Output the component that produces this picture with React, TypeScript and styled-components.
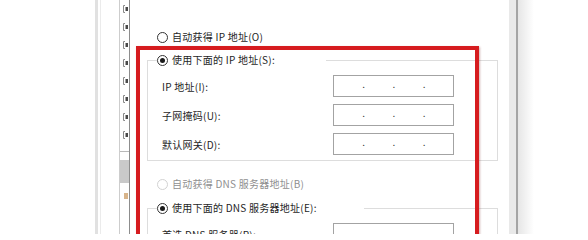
import * as React from 'react';
import styled, { createGlobalStyle } from 'styled-components';

const GlobalStyle = createGlobalStyle`
  html, body {
    margin: 0;
    padding: 0;
    background: #ffffff;
  }
  body {
    font-family: "Noto Sans CJK SC", "Noto Sans", sans-serif;
    font-size: 10px;
    letter-spacing: 0.25px;
    color: #1e1e1e;
  }
`;

const Page = styled.div`
  display: flex;
  width: 588px;
  height: 234px;
  overflow: hidden;
  background: #ffffff;
`;

/* the Ethernet properties window that sits behind the dialog */
const BackWindow = styled.div`
  display: flex;
  flex-shrink: 0;
  width: 129px;
  height: 100%;
`;

const Gutter = styled.div`
  width: 95px;
  flex-shrink: 0;
`;

const FrameEdge = styled.div`
  width: 3px;
  flex-shrink: 0;
  background: #e1e1e1;
`;

const FrameLine = styled.div`
  width: 1px;
  margin-left: 2px;
  flex-shrink: 0;
  background: #ebebeb;
`;

const TabGap = styled.div`
  width: 18px;
  flex-shrink: 0;
`;

const Pane = styled.div`
  flex: 1;
  display: flex;
  flex-direction: column;
  border-left: 1px solid #cdcdcd;
`;

const ListBox = styled.div`
  height: 152px;
  box-sizing: border-box;
  display: flex;
  flex-direction: column;
  gap: 10px;
  padding: 5px 0 0 3px;
  border-bottom: 1px solid #b9b9b9;
`;

const ButtonStub = styled.div`
  margin-top: 8px;
  height: 23px;
  background: #c9c9c9;
`;

const Glyph = styled.div`
  margin: 10px 0 0 4px;
  width: 4px;
  height: 6px;
  background: #d8b48a;
`;

const Dialog = styled.div`
  position: relative;
  flex-shrink: 0;
  box-sizing: border-box;
  width: 380px;
  height: 100%;
  display: flex;
  flex-direction: column;
  align-items: stretch;
  padding: 30px 11px 0 17px;
  background: #ffffff;
  border-left: 1px solid #8d8d8d;
`;

const RightFrame = styled.div`
  width: 7px;
  flex-shrink: 0;
  background: #e9e9e9;
`;

const DarkEdge = styled.div`
  width: 2px;
  flex-shrink: 0;
  background: #a4a4a4;
`;

const Shadow = styled.div`
  width: 16px;
  flex-shrink: 0;
  background: linear-gradient(to right, #e6e6e6, #ffffff);
`;

const RadioRow = styled.label<{ $gap?: number; $inset?: number }>`
  display: flex;
  align-items: center;
  gap: 4px;
  height: 14px;
  line-height: 14px;
  margin-top: ${(p) => p.$gap ?? 0}px;
  margin-left: ${(p) => p.$inset ?? 0}px;
  white-space: nowrap;
`;

const Circle = styled.span<{ $checked?: boolean; $disabled?: boolean }>`
  position: relative;
  box-sizing: border-box;
  width: 11px;
  height: 11px;
  border-radius: 50%;
  border: 1px solid ${(p) => (p.$disabled ? '#d2d2d2' : '#333333')};
  background: #ffffff;
  flex-shrink: 0;

  &::after {
    content: '';
    display: ${(p) => (p.$checked ? 'block' : 'none')};
    position: absolute;
    left: 2px;
    top: 2px;
    width: 5px;
    height: 5px;
    border-radius: 50%;
    background: #1a1a1a;
  }
`;

const RadioText = styled.span<{ $disabled?: boolean }>`
  color: ${(p) => (p.$disabled ? '#8f8f8f' : '#1e1e1e')};
`;

const GroupBox = styled.fieldset<{ $gap: number }>`
  margin: ${(p) => p.$gap}px 0 0 0;
  padding: 8px 43px 5px 14px;
  border: 1px solid #dddddd;
  min-width: 0;
  display: flex;
  flex-direction: column;
  gap: 7px;
`;

const GroupLegend = styled.legend<{ $width: number }>`
  box-sizing: border-box;
  width: ${(p) => p.$width}px;
  height: 14px;
  padding: 0;
  margin-left: -5px;
`;

const FieldRow = styled.div`
  display: flex;
  align-items: center;
  justify-content: space-between;
  height: 22px;
`;

const FieldLabel = styled.span`
  color: #1e1e1e;
`;

const IpBox = styled.div`
  box-sizing: border-box;
  width: 121px;
  height: 22px;
  display: flex;
  align-items: center;
  border: 1px solid #a3a3a3;
  background: #ffffff;
`;

const Segment = styled.span`
  flex: 1;
`;

const Dot = styled.span`
  width: 2px;
  text-align: center;
  font-size: 10px;
  line-height: 10px;
  letter-spacing: 0;
  color: #333333;
  transform: translateY(-2px);
`;

const Highlight = styled.div`
  position: absolute;
  left: 6px;
  top: 46px;
  width: 343px;
  height: 260px;
  box-sizing: border-box;
  border: 4px solid #d61c1f;
  box-shadow: 1px 1px 2px rgba(120, 40, 40, 0.35);
  pointer-events: none;
`;

function ListIcon() {
  return (
    <svg width="6" height="8" viewBox="0 0 6 8">
      <path d="M0.5 0.5 V7.5 M0.5 0.5 H2 M0.5 7.5 H2" fill="none" stroke="#8a8a8a" />
      <rect x="2.5" y="2" width="2.5" height="4" fill="#4a4a4a" />
    </svg>
  );
}

type RadioProps = { label: string; checked?: boolean; disabled?: boolean };

function Radio({ label, checked, disabled }: RadioProps) {
  return (
    <>
      <Circle $checked={checked} $disabled={disabled} />
      <RadioText $disabled={disabled}>{label}</RadioText>
    </>
  );
}

function IpField({ label }: { label: string }) {
  return (
    <FieldRow>
      <FieldLabel>{label}</FieldLabel>
      <IpBox>
        <Segment />
        <Dot>.</Dot>
        <Segment />
        <Dot>.</Dot>
        <Segment />
        <Dot>.</Dot>
        <Segment />
      </IpBox>
    </FieldRow>
  );
}

export default function App() {
  const icons = [0, 1, 2, 3, 4, 5, 6, 7];

  return (
    <>
      <GlobalStyle />
      <Page>
        <BackWindow>
          <Gutter />
          <FrameEdge />
          <FrameLine />
          <TabGap />
          <Pane>
            <ListBox>
              {icons.map((i) => (
                <ListIcon key={i} />
              ))}
            </ListBox>
            <ButtonStub />
            <Glyph />
          </Pane>
        </BackWindow>

        <Dialog>
          <RadioRow $inset={10}>
            <Radio label="自动获得 IP 地址(O)" />
          </RadioRow>

          <GroupBox $gap={9}>
            <GroupLegend $width={169}>
              <RadioRow>
                <Radio label="使用下面的 IP 地址(S):" checked />
              </RadioRow>
            </GroupLegend>
            <IpField label="IP 地址(I):" />
            <IpField label="子网掩码(U):" />
            <IpField label="默认网关(D):" />
          </GroupBox>

          <RadioRow $inset={10} $gap={16}>
            <Radio label="自动获得 DNS 服务器地址(B)" disabled />
          </RadioRow>

          <GroupBox $gap={10}>
            <GroupLegend $width={207}>
              <RadioRow>
                <Radio label="使用下面的 DNS 服务器地址(E):" checked />
              </RadioRow>
            </GroupLegend>
            <IpField label="首选 DNS 服务器(P):" />
          </GroupBox>

          <Highlight />
        </Dialog>

        <RightFrame />
        <DarkEdge />
        <Shadow />
      </Page>
    </>
  );
}
